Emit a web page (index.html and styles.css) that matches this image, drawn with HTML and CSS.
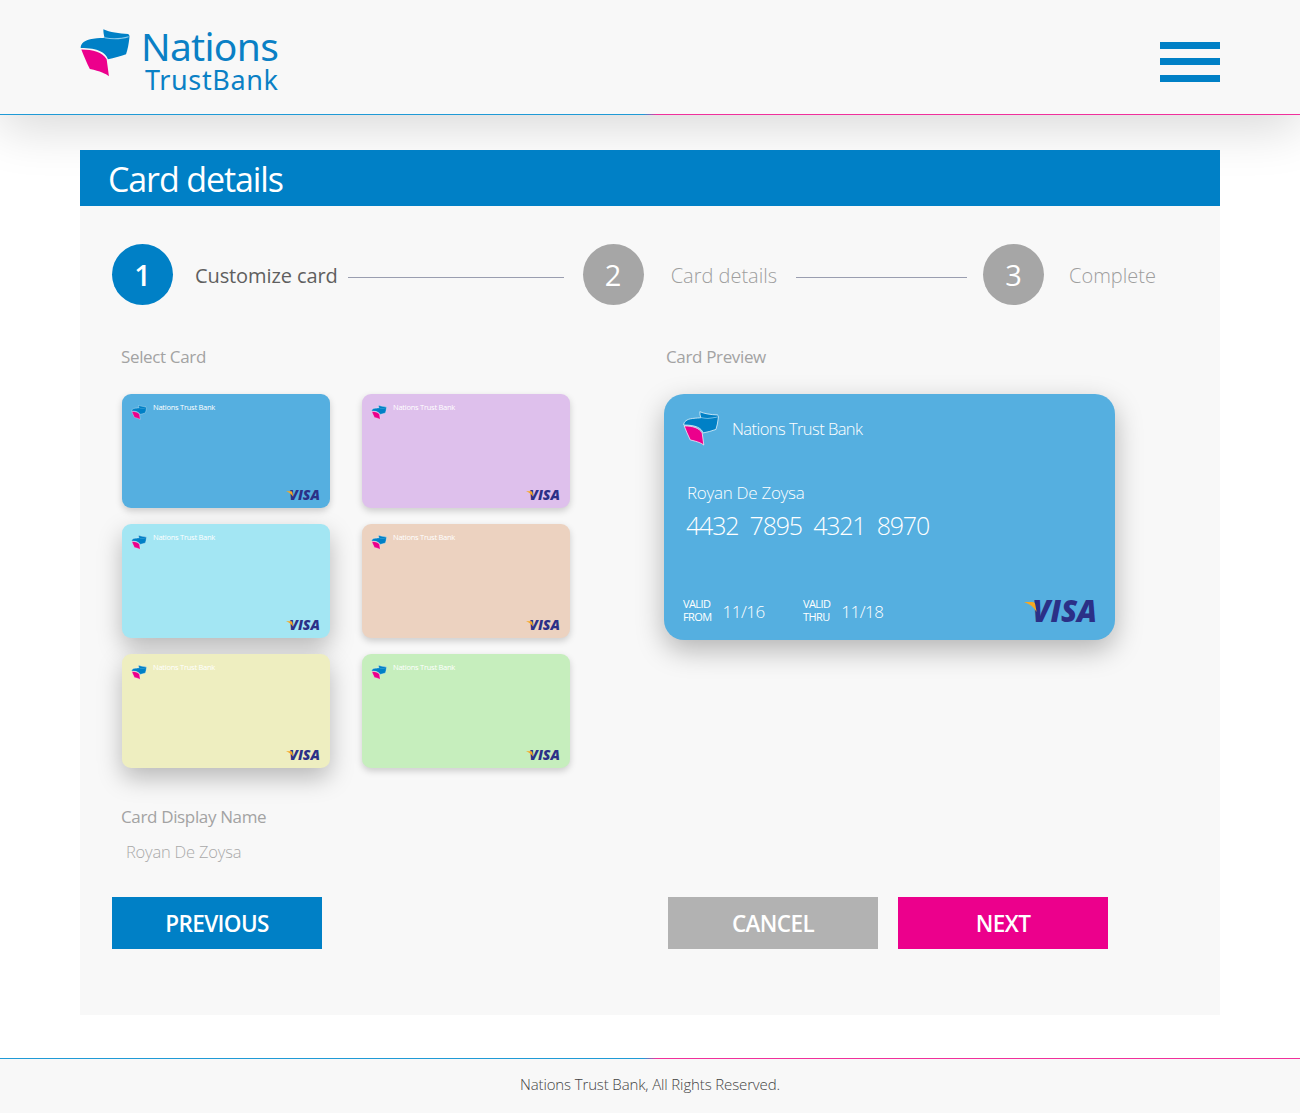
FILE: index.html
```html
<!DOCTYPE html>
<html lang="en">
<head>
    <meta charset="UTF-8">
    <meta name="viewport" content="width=device-width, initial-scale=1.0">
    <title>Card details - Nations Trust Bank</title>
    <link rel="stylesheet" href="styles.css">
</head>
<body>
    <svg class="defs" width="0" height="0">
        <symbol id="mark" viewBox="10 12 152 150">
            <path fill="#0080c6" d="M81 15C100 24 130 28 156 29C161 31 161 36 160 42C158 60 155 76 150 91C132 98 114 102 95 106C88 86 66 72 12 72C12 58 24 47 50 44C66 42 78 42 85 41C82 32 81 24 81 15Z"/>
            <path fill="#8ccbec" stroke="none" d="M85 39C110 44 135 42 158 36L158 39C135 46 110 47 85 42Z"/>
            <path fill="#ec008c" d="M14 76C50 76 78 84 91 106L98 158C88 150 72 143 40 136C30 116 22 96 14 76Z"/>
        </symbol>
        <symbol id="flag" viewBox="0 0 20 14">
            <path fill="#f7a823" d="M0 0H12C14 0 15.500 1 16 3L18 14C14 7 8 3 0 0Z"/>
        </symbol>
    </svg>

    <header class="site-header">
        <div class="brand">
            <svg class="brand-mark"><use href="#mark"/></svg>
            <div class="brand-name">
                <span class="brand-top">Nations</span>
                <span class="brand-bottom">TrustBank</span>
            </div>
        </div>
        <div class="burger"><span></span><span></span><span></span></div>
    </header>

    <main class="panel">
        <h1 class="panel-title">Card details</h1>

        <div class="steps">
            <div class="step active">
                <span class="step-num">1</span>
                <span class="step-label">Customize card</span>
            </div>
            <span class="step-line line-one"></span>
            <div class="step step-two">
                <span class="step-num">2</span>
                <span class="step-label">Card details</span>
            </div>
            <span class="step-line line-two"></span>
            <div class="step step-three">
                <span class="step-num">3</span>
                <span class="step-label">Complete</span>
            </div>
        </div>

        <div class="columns">
            <section class="left-col">
                <h2 class="field-title">Select Card</h2>
                <div class="card-grid">
                    <div class="mini-card blue">
                        <div class="mini-top"><svg class="mini-mark"><use href="#mark"/></svg><span>Nations Trust Bank</span></div>
                        <div class="visa mini-visa"><svg class="visa-flag"><use href="#flag"/></svg>VISA</div>
                    </div>
                    <div class="mini-card purple">
                        <div class="mini-top"><svg class="mini-mark"><use href="#mark"/></svg><span>Nations Trust Bank</span></div>
                        <div class="visa mini-visa"><svg class="visa-flag"><use href="#flag"/></svg>VISA</div>
                    </div>
                    <div class="mini-card cyan raised">
                        <div class="mini-top"><svg class="mini-mark"><use href="#mark"/></svg><span>Nations Trust Bank</span></div>
                        <div class="visa mini-visa"><svg class="visa-flag"><use href="#flag"/></svg>VISA</div>
                    </div>
                    <div class="mini-card peach">
                        <div class="mini-top"><svg class="mini-mark"><use href="#mark"/></svg><span>Nations Trust Bank</span></div>
                        <div class="visa mini-visa"><svg class="visa-flag"><use href="#flag"/></svg>VISA</div>
                    </div>
                    <div class="mini-card yellow raised">
                        <div class="mini-top"><svg class="mini-mark"><use href="#mark"/></svg><span>Nations Trust Bank</span></div>
                        <div class="visa mini-visa"><svg class="visa-flag"><use href="#flag"/></svg>VISA</div>
                    </div>
                    <div class="mini-card green">
                        <div class="mini-top"><svg class="mini-mark"><use href="#mark"/></svg><span>Nations Trust Bank</span></div>
                        <div class="visa mini-visa"><svg class="visa-flag"><use href="#flag"/></svg>VISA</div>
                    </div>
                </div>
                <h2 class="field-title display-title">Card Display Name</h2>
                <div class="display-name">Royan De Zoysa</div>
            </section>

            <section class="right-col">
                <h2 class="field-title">Card Preview</h2>
                <div class="preview-card">
                    <div class="preview-top">
                        <svg class="preview-mark"><use href="#mark"/></svg>
                        <span>Nations Trust Bank</span>
                    </div>
                    <div class="preview-holder">Royan De Zoysa</div>
                    <div class="preview-number">4432 7895 4321 8970</div>
                    <div class="preview-bottom">
                        <div class="valid">
                            <span class="valid-label">VALID<br>FROM</span>
                            <span class="valid-date">11/16</span>
                        </div>
                        <div class="valid">
                            <span class="valid-label">VALID<br>THRU</span>
                            <span class="valid-date">11/18</span>
                        </div>
                        <div class="visa big-visa"><svg class="visa-flag"><use href="#flag"/></svg>VISA</div>
                    </div>
                </div>
            </section>
        </div>

        <div class="actions">
            <button class="btn btn-blue" type="button">PREVIOUS</button>
            <div class="actions-right">
                <button class="btn btn-grey" type="button">CANCEL</button>
                <button class="btn btn-pink" type="button">NEXT</button>
            </div>
        </div>
    </main>

    <footer class="site-footer">Nations Trust Bank, All Rights Reserved.</footer>
</body>
</html>
```

FILE: styles.css
```css
* {
    box-sizing: border-box;
}
body {
    margin: 0;
    background-color: #fff;
    font-family: "Open Sans", "Noto Sans", sans-serif;
    color: #555;
}
h1, h2 {
    margin: 0;
    font-weight: 400;
}
.defs {
    position: absolute;
}

/* header */
.site-header {
    display: flex;
    justify-content: space-between;
    align-items: center;
    height: 115px;
    padding: 0 80px;
    background-color: #f8f8f8;
    border-bottom: 1px solid;
    border-image: linear-gradient(to right, #1f9ad6 49.500%, #f0309c 50.500%) 1;
    box-shadow: 0 14px 50px rgba(0, 0, 0, .15);
    position: relative;
}
.brand {
    display: flex;
    gap: 11px;
    margin-top: 7px;
}
.brand-mark {
    width: 50px;
    height: 50px;
    margin-top: 1px;
}
.brand-name {
    display: flex;
    flex-direction: column;
    color: #0a80c5;
    font-family: "Noto Sans", sans-serif;
}
.brand-top {
    font-size: 39px;
    line-height: 38px;
    letter-spacing: -.7px;
}
.brand-bottom {
    font-size: 27px;
    line-height: 29px;
    margin-left: 4px;
    letter-spacing: .62px;
}
.burger {
    display: flex;
    flex-direction: column;
    gap: 9.500px;
    width: 60px;
    margin-top: 9px;
}
.burger span {
    height: 7px;
    background-color: #0080c6;
}

/* panel */
.panel {
    position: relative;
    margin: 35px 80px 0;
    height: 865px;
    background-color: #f8f8f8;
}
.panel-title {
    height: 56px;
    padding: 0 28px;
    background-color: #0080c6;
    color: #fff;
    font-size: 34px;
    line-height: 58px;
    letter-spacing: -1.100px;
}

/* steps */
.steps {
    display: flex;
    align-items: center;
    padding: 38px 0 0 32px;
}
.step {
    display: flex;
    align-items: center;
    gap: 22px;
    color: #9e9e9e;
    font-size: 20px;
    font-weight: 300;
}
.step-two {
    gap: 27px;
}
.step-three {
    gap: 25px;
}
.step-label {
    margin-top: 2px;
}
.step-num {
    display: flex;
    justify-content: center;
    align-items: center;
    width: 61px;
    height: 61px;
    border-radius: 50%;
    background-color: #a6a6a6;
    color: #fff;
    font-size: 29px;
    font-weight: 500;
}
.step.active {
    color: #5f5f5f;
    font-weight: 500;
}
.step.active .step-label {
    margin-top: 1px;
    letter-spacing: -.1px;
}
.step.active .step-num {
    background-color: #0080c6;
    font-weight: 600;
}
.step-line {
    height: 1px;
    margin-top: 5px;
    background-color: #9a9eb0;
}
.line-one {
    width: 216px;
    margin-left: 10px;
    margin-right: 19px;
}
.line-two {
    width: 171px;
    margin-left: 19px;
    margin-right: 16px;
}

/* columns */
.columns {
    display: flex;
    padding: 40px 0 0 41px;
}
.left-col {
    width: 545px;
}
.field-title {
    color: #a3a3a3;
    font-size: 17px;
    font-weight: 500;
    line-height: 24px;
    letter-spacing: -.35px;
}
.card-grid {
    display: grid;
    grid-template-columns: 208px 208px;
    grid-auto-rows: 114px;
    column-gap: 32px;
    row-gap: 16px;
    margin: 25px 0 0 1px;
}
.mini-card {
    display: flex;
    flex-direction: column;
    justify-content: space-between;
    padding: 8px 10px 6px 9px;
    border-radius: 9px;
    box-shadow: 0 3px 7px rgba(0, 0, 0, .18);
}
.mini-card.raised {
    box-shadow: 0 10px 24px rgba(0, 0, 0, .26);
}
.blue { background-color: #55afe0; }
.purple { background-color: #dec0ec; }
.cyan { background-color: #a3e6f3; }
.peach { background-color: #ecd2c0; }
.yellow { background-color: #eeeec0; }
.green { background-color: #c6eebd; }
.mini-top {
    display: flex;
    gap: 6px;
    color: #fff;
    font-size: 7.500px;
    letter-spacing: -.25px;
    line-height: 11px;
}
.mini-mark {
    width: 16px;
    height: 15px;
    margin-top: 3px;
    stroke: #fff;
    stroke-width: 3;
}
.visa {
    align-self: flex-end;
    position: relative;
    color: #2b3087;
    font-style: italic;
    font-weight: 800;
}
.mini-visa {
    font-size: 14px;
    line-height: 14px;
}
.visa-flag {
    position: absolute;
    left: -3px;
    top: 3px;
    width: 8px;
    height: 6px;
}
.display-title {
    margin-top: 37px;
}
.display-name {
    margin: 11px 0 0 5px;
    color: #a9a9a9;
    font-size: 16.500px;
    font-weight: 300;
    line-height: 24px;
    letter-spacing: -.2px;
}

/* preview */
.right-col {
    width: 500px;
}
.preview-card {
    display: flex;
    flex-direction: column;
    width: 451px;
    height: 246px;
    margin: 25px 0 0 -2px;
    padding: 17px 19px 14px;
    border-radius: 20px;
    background-color: #55afe0;
    color: #fff;
    box-shadow: 0 10px 28px rgba(0, 0, 0, .28);
}
.preview-top {
    display: flex;
    align-items: center;
    gap: 13px;
    font-size: 16.500px;
    font-weight: 300;
    letter-spacing: -.55px;
}
.preview-mark {
    width: 36px;
    height: 35px;
    stroke: #fff;
    stroke-width: 3;
}
.preview-holder {
    margin: 35px 0 0 4px;
    font-size: 17px;
    font-weight: 300;
    line-height: 24px;
    letter-spacing: -.3px;
}
.preview-number {
    margin: 2px 0 0 3px;
    font-size: 25px;
    font-weight: 300;
    line-height: 36px;
    letter-spacing: -1.200px;
    word-spacing: 6px;
}
.preview-bottom {
    display: flex;
    align-items: center;
    margin-top: auto;
}
.valid {
    display: flex;
    align-items: center;
    gap: 11px;
    width: 120px;
}
.valid-label {
    margin-bottom: 2px;
    font-size: 11px;
    line-height: 13px;
    letter-spacing: -.6px;
}
.valid-date {
    font-size: 17px;
    font-weight: 300;
    letter-spacing: -.5px;
}
.big-visa {
    margin-left: auto;
    margin-right: -1px;
    font-size: 29.500px;
    line-height: 30px;
}
.big-visa .visa-flag {
    left: -8px;
    top: 5px;
    width: 14px;
    height: 12px;
}

/* buttons */
.actions {
    display: flex;
    justify-content: space-between;
    margin-top: 33px;
    padding: 0 112px 0 32px;
}
.actions-right {
    display: flex;
    gap: 20px;
}
.btn {
    width: 210px;
    height: 52px;
    border: none;
    color: #fff;
    font-family: inherit;
    font-size: 22.500px;
    font-weight: 600;
    letter-spacing: -.6px;
}
.btn-blue { background-color: #0080c6; }
.btn-grey { background-color: #b2b2b2; }
.btn-pink { background-color: #ec008c; }

/* footer */
.site-footer {
    height: 55px;
    margin-top: 43px;
    background-color: #f8f8f8;
    border-top: 1px solid;
    border-image: linear-gradient(to right, #1f9ad6 49.500%, #f0309c 50.500%) 1;
    color: #444;
    font-size: 15px;
    font-weight: 300;
    line-height: 50px;
    letter-spacing: -.13px;
    text-align: center;
}
```
